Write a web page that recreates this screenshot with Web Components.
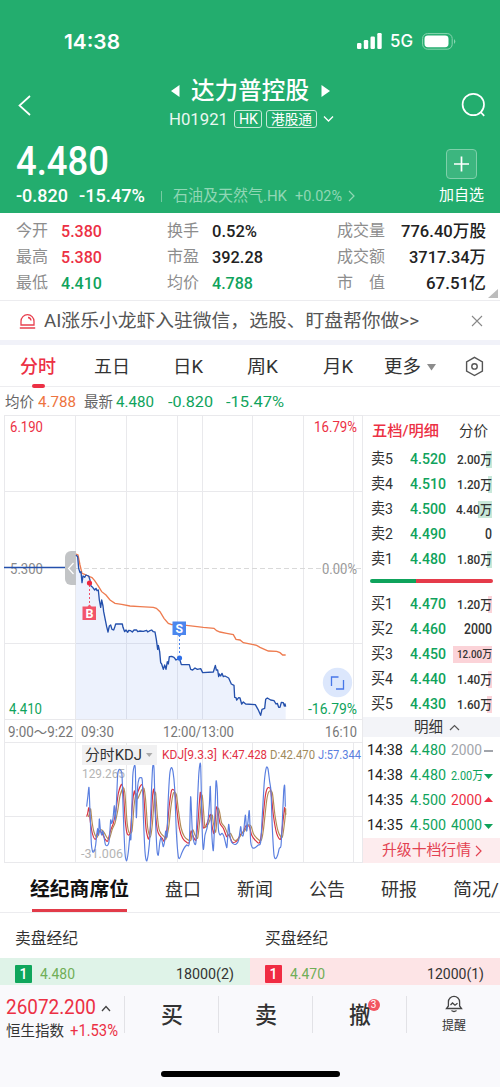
<!DOCTYPE html>
<html lang="zh-CN">
<head>
<meta charset="utf-8">
<title>达力普控股</title>
<style>
  body {
    margin: 0;
    width: 500px;
    height: 1087px;
    overflow: hidden;
    background: #fff;
    color: #333;
    font-family: Roboto, "Noto Sans CJK SC", sans-serif;
  }
</style>
</head>
<body>
<stock-page></stock-page>

<script>
const GREEN = "#0fa35c";
const RED = "#ec3044";

/** Text squeezed or stretched to a fixed width */

class FitText extends HTMLElement {
  connectedCallback() {
    const w = Number(this.getAttribute("w"));
    const root = this.attachShadow({ mode: "open" });
    root.innerHTML = `
      <style>
        :host { display: block; width: ${w}px; white-space: nowrap; flex: none; }
        span { display: inline-block; transform-origin: 0 50%; }
      </style>
      <span><slot></slot></span>`;
    const $span = root.querySelector("span");
    const natural = $span.getBoundingClientRect().width;
    if (natural) $span.style.transform = `scaleX(${w / natural})`;
  }
}

const t = (text, w, size, style = "") =>
  `<fit-text w="${w}" style="font-size:${size}px;${style}">${text}</fit-text>`;

/** Header */

class StockHeader extends HTMLElement {
  connectedCallback() {
    this.attachShadow({ mode: "open" }).innerHTML = `
<style>
  :host { display: block; height: 213px; background: #23ad6e; color: #fff; }
  svg { display: block; fill: none; stroke: #fff; }
  .status { display: flex; align-items: center; height: 62px; padding: 20px 44px 0 64px; box-sizing: border-box; font-family: Inter, sans-serif; }
  .status .grow { flex: 1; }
  .bars { margin-right: 8px; }
  .battery { margin-left: 9px; }
  .nav { display: grid; grid-template-columns: 150px 200px 150px; height: 72px; padding-top: 11px; box-sizing: border-box; }
  .back { margin: 22px 0 0 18px; }
  .search { margin: 19px 0 0 111px; }
  .name { display: flex; align-items: center; height: 36px; padding-left: 21px; gap: 12px; }
  .code { display: flex; align-items: center; height: 20px; padding-left: 19px; }
  .tag { display: flex; justify-content: center; height: 18px; box-sizing: border-box; border: 1px solid #c5e9d7; border-radius: 3px; line-height: 16px; }
  .quote { display: flex; justify-content: space-between; padding: 6px 16px 0; }
  .price { height: 42px; line-height: 42px; }
  .change { display: flex; align-items: center; height: 22px; line-height: 22px; margin-top: 3px; }
  .line { width: 1px; height: 11px; margin: 0 11px 0 16px; background: #75cba2; }
  .add { display: flex; flex-direction: column; align-items: center; padding-top: 9px; }
  .plus { box-sizing: border-box; width: 31px; height: 30px; border: 1px solid #7fd0aa; border-radius: 4px; background: #3cb67f; margin-bottom: 4px; }
</style>
<div class="status">
  ${t("14:38", 56, 20.5, "font-weight:600")}
  <div class="grow"></div>
  <svg class="bars" width="25" height="16" style="stroke:none;fill:#fff">
    <rect x="0" y="10" width="4.4" height="6" rx="1.2"/><rect x="6.8" y="7" width="4.4" height="9" rx="1.2"/>
    <rect x="13.5" y="3.5" width="4.4" height="12.5" rx="1.2"/><rect x="20.3" y="0" width="4.4" height="16" rx="1.2"/>
  </svg>
  ${t("5G", 23, 17, "font-weight:500")}
  <svg class="battery" width="34" height="17">
    <rect x=".6" y=".6" width="29.6" height="15.6" rx="5" stroke="#8ad5b1"/>
    <rect x="2.5" y="2.6" width="24" height="11.6" rx="3.4" fill="#fff" stroke="none"/>
    <path d="M32 6q2.6 2.4 0 5z" fill="#8ad5b1" stroke="none"/>
  </svg>
</div>
<div class="nav">
  <svg class="back" width="14" height="22" stroke-width="1.7"><path d="M12 1 1.5 10.5 12 20"/></svg>
  <div>
    <div class="name">
      <svg width="9" height="12" style="stroke:none;fill:#fff"><path d="M8.5 0v12L0 6z"/></svg>
      ${t("达力普控股", 118, 23.5, "font-weight:500;line-height:36px;margin-left:-1px")}
      <svg width="9" height="12" style="stroke:none;fill:#fff"><path d="M.5 0v12L9 6z"/></svg>
    </div>
    <div class="code">
      ${t("H01921", 59, 17, "margin-right:6px;color:#e9f7f0")}
      <div class="tag" style="width:28px">${t("HK", 19, 14)}</div>
      <div class="tag" style="width:51px;margin:0 6px 0 4px">${t("港股通", 41, 14)}</div>
      <svg width="11" height="8" stroke-width="1.3"><path d="m1 1.5 4.5 4.5L10 1.5"/></svg>
    </div>
  </div>
  <svg class="search" width="26" height="26" stroke-width="1.7"><circle cx="12.3" cy="12.5" r="10.7"/><path d="m19.6 20 3.6 3.8"/></svg>
</div>
<div class="quote">
  <div>
    <div class="price">${t("4.480", 93, 41, "font-weight:500")}</div>
    <div class="change">
      ${t("-0.820", 52, 18.5, "margin-right:11px;font-weight:500")}${t("-15.47%", 66, 18.5, "font-weight:500")}
      <div class="line"></div>
      ${t("石油及天然气.HK", 114, 15.5, "color:#90d7b5")}
      ${t("+0.02%", 47, 15.5, "margin:0 6px 0 8px;color:#90d7b5")}
      <svg width="8" height="12" style="stroke:#90d7b5" stroke-width="1.2"><path d="m1 1 5 5-5 5"/></svg>
    </div>
  </div>
  <div class="add">
    <div class="plus"><svg width="29" height="28" stroke-width="1.7"><path d="M7 14h15M14.5 6.5v15"/></svg></div>
    ${t("加自选", 45, 14.6, "line-height:24px")}
  </div>
</div>`;
  }
}

/** Key figures, three columns */

class StockFigures extends HTMLElement {
  connectedCallback() {
    const rows = [
      ["今开", "5.380", 41, RED, "换手", "0.52%", 45, "#222", "成交量", "776.40万股", 85],
      ["最高", "5.380", 41, RED, "市盈", "392.28", 51, "#222", "成交额", "3717.34万", 77],
      ["最低", "4.410", 41, GREEN, "均价", "4.788", 41, GREEN, "市　值", "67.51亿", 60],
    ];
    this.attachShadow({ mode: "open" }).innerHTML = `
<style>
  :host { display: grid; grid-template-rows: repeat(3, 26px); height: 88px; padding-top: 5px; box-sizing: border-box; border-bottom: 1px solid #ececef; }
  .row { display: grid; grid-template-columns: 45px 106px 45px 125px 48px 101px; padding-left: 16px; line-height: 26px; }
  .corner { position: absolute; left: 488px; top: 289px; fill: #bcbcbc; }
</style>
${rows.map(([a, b, bw, bc, c, d, dw, dc, e, f, fw]) => `
<div class="row">
  ${t(a, 32, 15.8, "color:#8d8d8d")}${t(b, bw, 16.8, `font-weight:500;color:${bc}`)}
  ${t(c, 32, 15.8, "color:#8d8d8d")}${t(d, dw, 16.8, `font-weight:500;color:${dc}`)}
  ${t(e, 48, 15.8, "color:#8d8d8d")}${t(f, fw, 16.8, "font-weight:500;color:#222;justify-self:end")}
</div>`).join("")}
<svg class="corner" width="10" height="10"><path d="M10 0v9H0z"/></svg>`;
  }
}

/** Notice line */

class NoticeBar extends HTMLElement {
  connectedCallback() {
    this.attachShadow({ mode: "open" }).innerHTML = `
<style>
  :host { display: flex; align-items: center; height: 44px; padding: 1px 17px 0 19px; box-sizing: border-box; border-bottom: 5px solid #f1f2f9; }
  svg { fill: none; }
  .grow { flex: 1; }
</style>
<svg width="17" height="17" stroke="#e8404f" stroke-width="1.3">
  <path d="M2 12V8.2a6.5 6.5 0 0 1 13 0V12zM.8 15h15.4M9 4.5q2.6.2 3 3"/>
</svg>
${t("<slot></slot>", 375, 18, "margin-left:8px;color:#555;line-height:38px")}
<div class="grow"></div>
<svg width="12" height="12" stroke="#888" stroke-width="1.1"><path d="m1 1 10 10M11 1 1 11"/></svg>`;
  }
}

/** Chart period tabs and the latest values under them */

class PeriodTabs extends HTMLElement {
  connectedCallback() {
    const tabs = [["五日", 36, 38], ["日K", 30, 43], ["周K", 31, 44], ["月K", 30, 45], ["更多", 37, 31]];
    this.attachShadow({ mode: "open" }).innerHTML = `
<style>
  :host { display: block; }
  .tabs { display: flex; align-items: flex-start; height: 42px; box-sizing: border-box; padding: 2px 0 0 20px; line-height: 39px; border-bottom: 1px solid #ededf0; }
  .on { display: flex; flex-direction: column; align-items: center; color: ${RED}; }
  .on i { width: 13px; height: 3.5px; margin-top: -2px; border-radius: 2px; background: ${RED}; }
  .info { display: flex; height: 28px; line-height: 30px; padding-left: 5px; }
</style>
<div class="tabs">
  <div class="on">${t("分时", 36, 18, "font-weight:500")}<i></i></div>
  ${tabs.map(([s, w, gap]) => t(s, w, 18, `margin-left:${gap}px`)).join("")}
  <svg width="9" height="7" style="margin:17px 0 0 6px" fill="#8c8c8c"><path d="M0 0h9L4.5 6.5z"/></svg>
  <svg width="21" height="21" style="margin:9px 0 0 28px" fill="none" stroke="#555" stroke-width="1.4">
    <path d="M10.5 1.3 18.4 5.8v9.2l-7.9 4.5L2.6 15V5.8z"/><circle cx="10.5" cy="10.4" r="2.7"/>
  </svg>
</div>
<div class="info">
  ${t("均价", 29, 14.7, "color:#666")}${t("4.788", 38, 15.4, "margin-left:4px;color:#ee7440")}
  ${t("最新", 29, 14.7, "margin-left:8px;color:#666")}${t("4.480", 38, 15.4, `margin-left:3px;color:${GREEN}`)}
  ${t("-0.820", 45, 15.4, `margin-left:14px;color:${GREEN}`)}${t("-15.47%", 58, 15.4, `margin-left:13px;color:${GREEN}`)}
</div>`;
  }
}

/** Intraday curve and KDJ, both on one canvas */

const PRICE = [48,45,53,50,56,85,60,98,63,95,66,128,69,108,74,112,78,105,86,108,90,120,93,138,98,142,104,150,108,145,111,152,115,150,118,180,122,202,125,180,129,198,131,215,135,235,140,260,144,276,148,258,152,255,156,268,161,270,164,262,167,252,187,252,189,262,194,275,198,270,203,277,206,271,212,272,217,276,222,270,230,270,233,275,240,273,250,274,260,271,263,276,270,272,275,270,280,275,285,276,289,298,293,328,295,316,299,335,302,368,305,372,310,388,314,375,318,388,322,365,325,372,328,350,335,349,342,352,348,360,358,354,364,374,388,374,392,388,398,390,405,384,412,388,422,386,428,398,460,396,466,376,469,390,473,390,476,410,478,402,482,408,486,400,490,410,495,408,506,414,514,432,522,436,524,472,528,473,530,480,536,473,540,474,545,492,550,486,557,492,586,494,594,508,602,526,606,508,614,505,617,478,622,474,632,480,642,482,648,492,652,490,656,502,660,502,664,487,670,488,673,498,675,492,677,500];
const AVERAGE = [48,42,54,45,60,75,66,100,74,103,84,108,96,113,104,122,116,140,125,155,138,165,150,180,165,190,185,193,210,198,240,200,280,202,289,205,300,215,312,235,325,250,335,254,345,253,380,256,430,262,462,265,470,272,480,276,500,280,520,284,528,298,540,300,550,308,580,314,590,316,600,322,625,333,650,334,660,338,668,345,677,345];
const J = [20,155,24,120,27,98,30,170,34,265,38,290,43,288,47,270,50,240,53,220,56,240,58,192,61,222,65,240,68,228,72,245,76,268,81,272,86,265,89,240,92,195,95,205,99,190,103,152,106,195,109,150,113,60,117,44,122,46,126,60,130,180,135,295,140,317,145,290,150,240,153,248,158,70,162,36,166,42,169,188,173,95,177,72,182,68,187,78,190,180,195,290,200,318,205,295,210,240,214,120,218,36,222,40,226,180,231,285,235,300,239,265,243,248,247,262,250,275,254,258,257,228,261,245,264,150,269,60,274,38,279,50,284,100,289,230,295,305,300,308,305,295,312,280,320,270,328,263,332,125,337,230,343,265,348,260,352,150,357,50,362,32,366,210,370,283,375,240,382,215,388,150,391,95,395,230,400,287,404,200,408,80,412,110,415,220,420,240,426,235,432,245,438,270,441,275,446,208,451,250,458,265,468,268,476,255,482,215,485,238,490,240,496,180,500,228,504,200,508,168,512,260,517,278,525,278,535,270,542,262,547,180,553,80,559,38,564,42,569,80,573,110,577,220,582,300,587,311,593,300,598,280,603,272,607,200,611,110,614,92,616,155];
const K = [20,185,23,175,27,158,31,200,37,235,46,253,54,232,60,228,68,238,75,252,83,258,92,225,100,205,108,165,115,115,125,88,130,110,136,200,142,237,151,232,157,150,163,108,167,125,172,115,180,95,187,90,192,130,198,220,206,252,212,210,218,120,222,105,227,180,232,225,238,240,247,250,253,258,261,220,268,150,275,106,284,110,290,160,298,220,308,250,320,262,328,262,333,228,340,245,348,255,354,200,361,112,366,170,370,218,380,208,391,178,395,205,402,235,409,158,414,170,420,205,430,220,440,245,447,240,457,262,470,258,482,238,490,230,498,212,508,215,515,240,525,255,538,264,545,230,555,130,562,100,572,105,580,180,590,235,602,252,610,190,614,158,617,178];
const D = K.map((v, i) => (i % 2 ? v + (195 - v) * 0.1 : Math.min(v + 5, 617)));

const line = (p) => "M" + p.join(" ");

// soft spline that passes through every point
const smooth = (p) => {
  const n = p.length / 2;
  const at = (i) => {
    const k = Math.max(0, Math.min(n - 1, i));
    return [p[k * 2], p[k * 2 + 1]];
  };
  let d = `M${p[0]} ${p[1]}`;
  for (let i = 0; i < n - 1; i++) {
    const [a, b, c, e] = [at(i - 1), at(i), at(i + 1), at(i + 2)];
    d += `C${b[0] + (c[0] - a[0]) / 8} ${b[1] + (c[1] - a[1]) / 8} ${c[0] - (e[0] - b[0]) / 8} ${c[1] - (e[1] - b[1]) / 8} ${c[0]} ${c[1]}`;
  }
  return d;
};

const label = (x, y, w, size, fill, s, extra = "") =>
  `<text x="${x}" y="${y}" font-size="${size}" fill="${fill}" textLength="${w}" lengthAdjust="spacingAndGlyphs" ${extra}>${s}</text>`;

class StockChart extends HTMLElement {
  connectedCallback() {
    const v = [126.5, 177.5, 202.5, 252.5, 303.5, 353.5];
    const h = [415.5, 491.5, 643.5, 719.5, 742.5, 816.5, 862.5];
    const grid =
      h.map((y) => `M4 ${y}H363`).join("") +
      v.map((x) => `M${x} 415V719M${x} 743V863`).join("") +
      "M4.5 415V863M75.5 415V863M362.5 415V863";
    this.attachShadow({ mode: "open" }).innerHTML = `
<style>
  :host { display: block; width: 363px; height: 448px; }
  svg { display: block; }
</style>
<svg width="363" height="448" viewBox="0 415 363 448" fill="none">
  <path d="${grid}" stroke="#e9e9ec"/>
  <path d="M76 568.5H362" stroke="#d9d9d9" stroke-dasharray="5 3"/>
  ${label(10, 432, 33, 14.4, RED, "6.190")}
  ${label(314, 432, 43, 14.4, RED, "16.79%")}
  ${label(10, 573.5, 33, 14.4, "#8b8b8b", "5.300")}
  ${label(322, 573.5, 35, 14.2, "#999", "0.00%")}
  <path d="M4 567.5H75" stroke="#2450ac" stroke-width="1.3"/>
  <path d="M76 551H71a6 6 0 0 0-6 6v22a6 6 0 0 0 6 6h5z" fill="#c2c4c6"/>
  <path d="m73.5 563-5 5.5 5 5.5" stroke="#fff" stroke-width="1.2"/>
  <g transform="translate(60 540) scale(.33333)">
    <path d="${line(PRICE)}V538H48z" fill="#4f7cf0" fill-opacity=".1"/>
    <path d="${line(AVERAGE)}" stroke="#ee7b4f" stroke-width="4"/>
    <path d="${line(PRICE)}" stroke="#2450ac" stroke-width="4" stroke-linejoin="round"/>
  </g>
  <path d="M89.5 585v20" stroke="#f0506a" stroke-dasharray="2 2"/>
  <path d="M179.5 635v20" stroke="#4b86ee" stroke-dasharray="2 2"/>
  <circle cx="89.5" cy="583" r="2.6" fill="#ee2840"/>
  <circle cx="179.5" cy="658" r="2.6" fill="#2f6fe8"/>
  <path d="M82.5 606.5h5l2-2 2 2h4.5V620H82.5z" fill="#f2556b"/>
  <path d="M172.5 621.5H186V635h-4.5l-2 2-2-2h-5z" fill="#4b86ee"/>
  ${label(85.5, 617.5, 8, 12, "#fff", "B", 'font-weight="700"')}
  ${label(175.5, 632.5, 7.5, 12, "#fff", "S", 'font-weight="700"')}
  <circle cx="337.5" cy="682.5" r="14.7" fill="#dce7fc"/>
  <path d="M331.5 686v-9h7M336 689h7.5v-9" stroke="#4777e8" stroke-width="1.3"/>
  ${label(9, 714, 33, 14.4, GREEN, "4.410")}
  ${label(308, 714, 49, 14.4, GREEN, "-16.79%")}
  ${label(8, 736.5, 65, 14, "#777", "9:00～9:22")}
  ${label(81, 736.5, 33, 14, "#777", "09:30")}
  ${label(163, 736.5, 71, 14, "#777", "12:00/13:00")}
  ${label(325, 736.5, 32, 14, "#777", "16:10")}
  ${label(82, 778, 43, 13, "#b4b4b4", "129.265")}
  ${label(81, 858, 42, 13, "#b4b4b4", "-31.006")}
  <g transform="translate(80 755) scale(.33333)" stroke-width="3.5" stroke-linejoin="round">
    <path d="${smooth(K)}" stroke="#d93342"/>
    <path d="${smooth(D)}" stroke="#b28a55"/>
    <path d="${smooth(J)}" stroke="#5a7fe0"/>
  </g>
  <rect x="82" y="745" width="75" height="20" fill="#f1f1f2"/>
  ${label(85, 760, 57, 14.7, "#333", "分时KDJ")}
  <path d="M146 753h6.5l-3.25 4z" fill="#aaa"/>
  ${label(162, 759, 55, 12, "#e23245", "KDJ[9.3.3]")}
  ${label(222, 759, 45, 12, "#e23245", "K:47.428")}
  ${label(270, 759, 45, 12, "#a08a5c", "D:42.470")}
  ${label(318, 759, 43, 12, "#5a7fe0", "J:57.344")}
</svg>`;
  }
}

/** Five levels each way, then the latest trades */

class OrderBook extends HTMLElement {
  connectedCallback() {
    // level, price, quantity, text width, font size, depth bar width
    const asks = [
      ["卖5", "4.520", "2.00万", 35, 12.6, 6],
      ["卖4", "4.510", "1.20万", 35, 12.6, 4],
      ["卖3", "4.500", "4.40万", 36, 12.6, 14],
      ["卖2", "4.490", "0", 7, 14, 0],
      ["卖1", "4.480", "1.80万", 35, 12.6, 5],
    ];
    const bids = [
      ["买1", "4.470", "1.20万", 35, 12.6, 4],
      ["买2", "4.460", "2000", 28, 14, 0],
      ["买3", "4.450", "12.00万", 35, 11.2, 39],
      ["买4", "4.440", "1.40万", 35, 12.6, 4],
      ["买5", "4.430", "1.60万", 35, 12.6, 5],
    ];
    const trades = [
      ["14:38", "4.480", "2000", 31, 15, "#a2a5ab", "M0 4h9v2H0z"],
      ["14:38", "4.480", "2.00万", 32, 12.5, GREEN, "M0 3h9L4.5 8z"],
      ["14:35", "4.500", "2000", 31, 15, RED, "M0 6h9L4.5 1z"],
      ["14:35", "4.500", "4000", 31, 15, GREEN, "M0 3h9L4.5 8z"],
    ];
    const level = (color) => ([name, price, qty, w, size, bar]) => `
<div class="level">
  ${t(name, 22, 15.5)}${t(price, 36, 15.2, `font-weight:500;color:${GREEN}`)}
  <div class="qty" style="background:linear-gradient(${color},${color}) 100% 50% / ${bar}px 17px no-repeat">
    ${t(qty, w, size, "font-weight:500")}
  </div>
</div>`;
    this.attachShadow({ mode: "open" }).innerHTML = `
<style>
  :host { display: flex; flex-direction: column; width: 137px; height: 448px; box-sizing: border-box; border-top: 1px solid #ececef; }
  .head { display: flex; gap: 20px; height: 31px; padding-left: 9px; line-height: 31px; }
  .level { display: grid; grid-template-columns: 39px 43px 39px; height: 25px; padding-left: 8px; line-height: 25px; }
  .qty { display: flex; justify-content: flex-end; }
  .ratio { height: 4px; margin: 7px 7px 9px; border-radius: 2px; background: linear-gradient(90deg, ${GREEN} 37%, #e53b4a 37%); }
  .sub { display: flex; justify-content: center; align-items: center; gap: 6px; height: 20px; line-height: 20px; margin-bottom: 1px; background: #f3f4f8; padding-left: 10px; }
  .trade { display: grid; grid-template-columns: 43px 41px 33px 10px; align-items: center; height: 25px; line-height: 25px; padding-left: 4px; }
  .more { flex: 1; display: flex; justify-content: center; align-items: center; gap: 4px; background: #fdecee; color: #e34251; line-height: 25px; }
</style>
<div class="head">${t("五档/明细", 67, 15, `font-weight:500;color:${RED}`)}${t("分价", 29, 14.7)}</div>
${asks.map(level("#c8e8d9")).join("")}
<div class="ratio"></div>
<div>${bids.map(level("#fbd3d8")).join("")}</div>
<div class="sub">${t("明细", 29, 14.8)}<svg width="11" height="7" fill="none" stroke="#555" stroke-width="1.2"><path d="m1 6 4.5-4.5L10 6"/></svg></div>
${trades.map(([time, price, qty, w, size, c, mark]) => `
<div class="trade">
  ${t(time, 36, 15.2, "color:#222")}${t(price, 36, 15.2, `color:${GREEN}`)}${t(qty, w, size, `color:${c}`)}
  <svg width="9" height="10" fill="${c}"><path d="${mark}"/></svg>
</div>`).join("")}
<div class="more">${t("升级十档行情", 89, 14.8)}<svg width="7" height="12" fill="none" stroke="#e34251" stroke-width="1.2"><path d="m1 1 5 5-5 5"/></svg></div>`;
  }
}

/** Broker seats */

class BrokerPanel extends HTMLElement {
  connectedCallback() {
    const tabs = [["盘口", 36, 36], ["新闻", 36, 36], ["公告", 36, 36], ["研报", 36, 36], ["简况/", 46, 36]];
    const side = (title, bg, badge, price, qty, w) => `
<div class="side">
  <div class="title">${t(title, 63, 15.8)}</div>
  <div class="seat" style="background:${bg}">
    <b style="background:${badge}">1</b>
    ${t(price, 35, 15.2, "color:#70ae57")}
    <div class="grow"></div>
    ${t(qty, w, 15.2)}
  </div>
</div>`;
    this.attachShadow({ mode: "open" }).innerHTML = `
<style>
  :host { display: block; height: 122px; overflow: hidden; }
  .tabs { display: flex; height: 50px; box-sizing: border-box; padding-left: 30px; line-height: 53px; border-bottom: 1px solid #ececef; overflow: hidden; }
  .on { display: flex; flex-direction: column; align-items: center; color: #111; }
  .on > :first-child { height: 46px; }
  .on i { width: 95px; height: 3px; background: #e23b49; }
  .sides { display: grid; grid-template-columns: 1fr 1fr; }
  .title { height: 45px; padding: 4px 0 0 15px; box-sizing: border-box; line-height: 43px; }
  .seat { display: flex; align-items: center; height: 27px; padding: 5px 16px 0 15px; box-sizing: border-box; line-height: 22px; }
  b { width: 17px; height: 18px; margin-right: 8px; border-radius: 1px; color: #fff; font: 500 14px/18px Roboto, sans-serif; text-align: center; }
  .grow { flex: 1; }
</style>
<div class="tabs">
  <div class="on">${t("经纪商席位", 99, 19.5, "font-weight:700")}<i></i></div>
  ${tabs.map(([s, w, gap]) => t(s, w, 18, `margin-left:${gap}px`)).join("")}
</div>
<div class="sides">
  ${side("卖盘经纪", "#dff3e8", "#0fa65c", "4.480", "18000(2)", 58)}
  ${side("买盘经纪", "#fde4e6", "#f02c43", "4.470", "12000(1)", 57)}
</div>`;
  }
}

/** Bottom trading bar */

class TradeBar extends HTMLElement {
  connectedCallback() {
    this.attachShadow({ mode: "open" }).innerHTML = `
<style>
  :host { display: block; height: 103px; background: #f9f9fc; }
  .bar { display: grid; grid-template-columns: 124px repeat(3, 94px) 94px; height: 86px; }
  .cell { display: flex; justify-content: center; height: 37px; margin-top: 11px; border-left: 1px solid #e2e2e6; line-height: 39px; }
  .index { padding: 11px 0 0 6px; }
  .index div { display: flex; align-items: center; height: 24px; line-height: 24px; }
  .mark { position: relative; }
  .mark b { position: absolute; left: 19px; top: 3px; width: 12px; height: 12px; border-radius: 6px; background: #f25561; color: #fff; font: 10px/12px Roboto, sans-serif; text-align: center; }
  .remind { flex-direction: column; align-items: center; justify-content: flex-start; }
  .home { width: 179px; height: 6px; margin: 0 0 0 161px; border-radius: 3px; background: #000; }
</style>
<div class="bar">
  <div class="index">
    <div>${t("26072.200", 90, 19.5, `color:${RED};margin-right:5px`)}<svg width="10" height="7" fill="none" stroke="#444" stroke-width="1.3"><path d="m1 6 4-4.5L9 6"/></svg></div>
    <div style="height:21px">${t("恒生指数", 58, 14.6)}${t("+1.53%", 48, 15.8, `color:${RED};margin-left:6px`)}</div>
  </div>
  <div class="cell">${t("买", 22, 22.5, "font-weight:500")}</div>
  <div class="cell">${t("卖", 22, 22.5, "font-weight:500")}</div>
  <div class="cell"><div class="mark">${t("撤", 22, 22.5, "font-weight:500")}<b>3</b></div></div>
  <div class="cell remind">
    <svg width="18" height="18" fill="none" stroke="#444" stroke-width="1.3" style="flex:none;margin-top:-1px">
      <path d="M1.5 13.5H16.5L14.6 11V7a5.6 5.6 0 0 0-11.2 0v4zM6.5 15.5q2.5 2 5 0M5.5 10l2-2 2.5 2.2 2.5-2"/>
    </svg>
    ${t("提醒", 24, 12.2, "line-height:26px")}
  </div>
</div>
<div class="home"></div>`;
  }
}

class StockPage extends HTMLElement {
  connectedCallback() {
    this.attachShadow({ mode: "open" }).innerHTML = `
<style>
  :host { display: block; width: 500px; }
  .main { display: flex; }
</style>
<stock-header></stock-header>
<stock-figures></stock-figures>
<notice-bar>AI涨乐小龙虾入驻微信，选股、盯盘帮你做&gt;&gt;</notice-bar>
<period-tabs></period-tabs>
<div class="main"><stock-chart></stock-chart><order-book></order-book></div>
<broker-panel></broker-panel>
<trade-bar></trade-bar>`;
  }
}

customElements.define("fit-text", FitText);
customElements.define("stock-header", StockHeader);
customElements.define("stock-figures", StockFigures);
customElements.define("notice-bar", NoticeBar);
customElements.define("period-tabs", PeriodTabs);
customElements.define("stock-chart", StockChart);
customElements.define("order-book", OrderBook);
customElements.define("broker-panel", BrokerPanel);
customElements.define("trade-bar", TradeBar);
customElements.define("stock-page", StockPage);
</script>
</body>
</html>
